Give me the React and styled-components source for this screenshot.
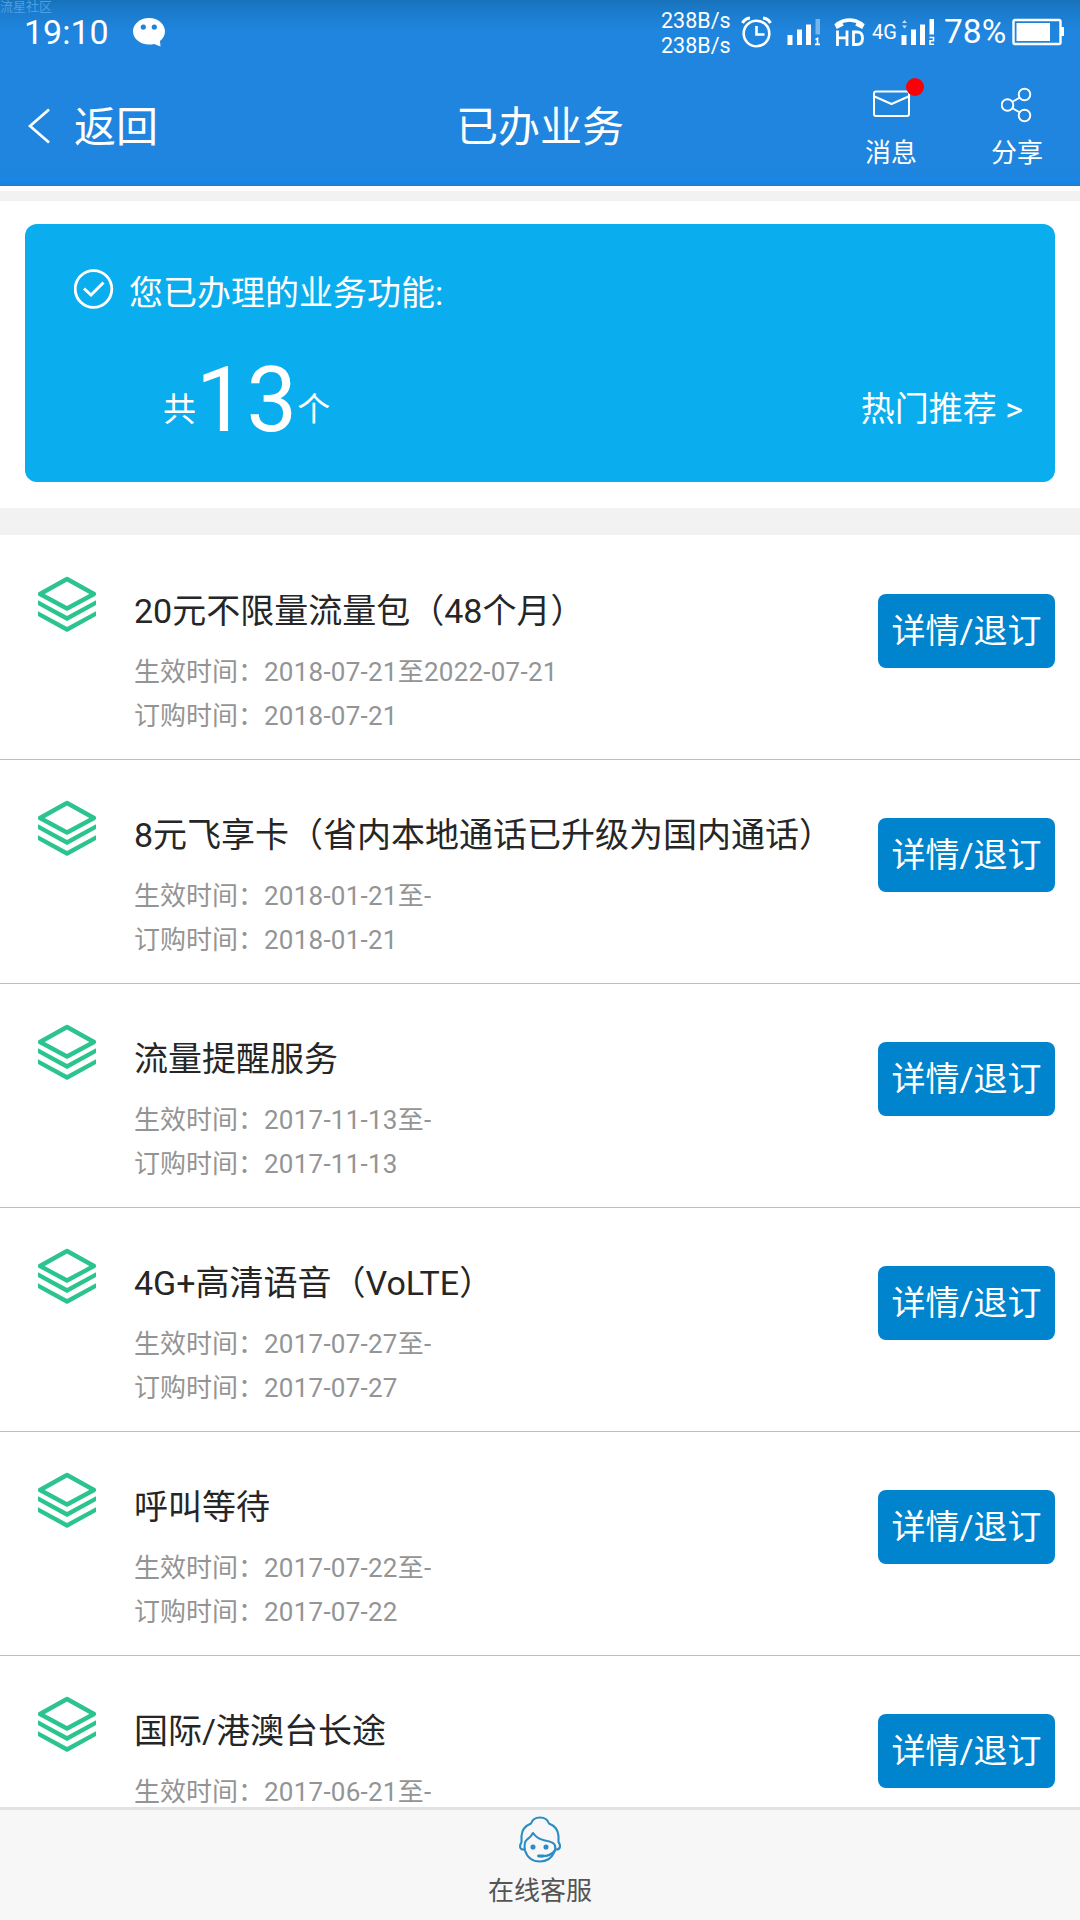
import React from "react";
import styled, { createGlobalStyle } from "styled-components";

const GlobalStyle = createGlobalStyle`
  * { box-sizing: border-box; }
  html, body { margin: 0; padding: 0; }
  body {
    background: #fff;
    font-family: Roboto, "Noto Sans CJK SC", sans-serif;
    color: #222;
    overflow: hidden;
  }
`;

const Screen = styled.div`
  width: 1080px;
  height: 1920px;
  display: flex;
  flex-direction: column;
  overflow: hidden;
  background: #fff;
`;

const Top = styled.header`
  position: relative;
  height: 186px;
  flex: none;
  color: #fff;
  background: linear-gradient(#1772ba 0, #1b7ccd 12px, #1f85de 32px, #1f85de 170px, #1a86e4 182px, #1c7fd6 186px);
`;

const Watermark = styled.span`
  position: absolute;
  left: 0;
  top: -2px;
  font-size: 13px;
  line-height: 18px;
  color: #4ba0e4;
`;

const StatusBar = styled.div`
  height: 64px;
  padding: 0 15px 0 24px;
  display: flex;
  align-items: center;
`;

const Clock = styled.span`
  font-size: 34px;
  line-height: 62px;
  width: 109px;
  margin-top: -1px;
`;

const StatusGroup = styled.div`
  margin-left: auto;
  display: flex;
  align-items: center;
`;

const Speed = styled.div`
  font-size: 21.5px;
  line-height: 25px;
  width: 80px;
  padding-top: 1px;
`;

const Network = styled.span`
  font-size: 20px;
  line-height: 62px;
  width: 28px;
  margin-left: -1px;
  margin-right: 1px;
`;

const Percent = styled.span`
  font-size: 33.5px;
  line-height: 62px;
  width: 68px;
`;

const StatusIcon = styled.svg`
  display: block;
  flex: none;
  margin-right: ${(p) => p.$gap || 0}px;
`;

const NavBar = styled.nav`
  height: 122px;
  display: grid;
  grid-template-columns: 1fr auto 1fr;
  padding: 0 37px 0 28px;
`;

const Back = styled.div`
  height: 126px;
  display: flex;
  align-items: center;
  gap: 24px;
  font-size: 42px;
  line-height: 60px;

  span { padding-top: 2px; }
  svg { margin-top: -2px; }
`;

const Title = styled.h1`
  margin: 0;
  font-size: 42px;
  font-weight: 400;
  line-height: 128px;
  padding-left: 9px;
`;

const Actions = styled.div`
  display: flex;
  justify-content: flex-end;
  gap: 74px;
`;

const Action = styled.div`
  position: relative;
  width: 52px;
  padding-top: 20px;
  display: flex;
  flex-direction: column;
  align-items: center;
  font-size: 26px;
  line-height: 34px;

  svg { display: block; margin-bottom: 12px; }
`;

const Dot = styled.i`
  position: absolute;
  left: 41px;
  top: 14px;
  width: 18px;
  height: 18px;
  border-radius: 50%;
  background: #fb0007;
`;

const Band = styled.div`
  flex: none;
  height: ${(p) => p.$height}px;
  margin-top: ${(p) => p.$before || 0}px;
  background: #f2f2f2;
`;

const Summary = styled.section`
  flex: none;
  height: 258px;
  margin: 23px 25px 26px;
  padding: 45px 32px 0 49px;
  border-radius: 12px;
  background: #0aadee;
  color: #fff;
`;

const SummaryHead = styled.div`
  display: flex;
  align-items: center;
  gap: 15px;
  height: 48px;
  font-size: 34px;
  line-height: 48px;

  svg { margin-top: -9px; }
`;

const SummaryBody = styled.div`
  display: flex;
  align-items: baseline;
  justify-content: space-between;
  margin-top: 19px;
  padding-left: 89px;
  font-size: 34px;
  line-height: 110px;
`;

const Count = styled.div`
  font-size: 33px;

  b {
    font-size: 90px;
    font-weight: 400;
    line-height: 110px;
    position: relative;
    top: 10px;
  }
`;

const List = styled.main`
  flex: 1;
  min-height: 0;
  padding-top: 1px;
  overflow: hidden;
`;

const Row = styled.article`
  height: 224px;
  display: flex;
  align-items: flex-start;
  padding: 39px 25px 0 38px;
  border-bottom: 1px solid #bdbdbd;
`;

const Info = styled.div`
  flex: 1;
  padding: 14px 0 0 38px;
`;

const Name = styled.h2`
  margin: 0 0 17px;
  font-size: 34px;
  font-weight: 400;
  line-height: 44px;
  color: #262626;
  white-space: nowrap;
`;

const Meta = styled.p`
  margin: 0;
  font-size: 26px;
  line-height: 44px;
  color: #949494;

  span { letter-spacing: 0.24px; }
`;

const DetailButton = styled.button`
  margin: 19px 0 0;
  padding: 1px 0 0;
  width: 177px;
  height: 74px;
  border: 0;
  border-radius: 8px;
  background: #0084cd;
  color: #fff;
  font: inherit;
  font-size: 34px;
  line-height: 73px;
`;

const Footer = styled.footer`
  flex: none;
  height: 113px;
  padding-top: 6px;
  border-top: 3px solid #e2e2e2;
  background: #f7f7f7;
  display: flex;
  flex-direction: column;
  align-items: center;
  font-size: 26px;
  line-height: 34px;
  color: #555;

  svg { margin-bottom: 11px; }
`;

const services = [
  { name: "20元不限量流量包（48个月）", valid: "2018-07-21至2022-07-21", ordered: "2018-07-21" },
  { name: "8元飞享卡（省内本地通话已升级为国内通话）", valid: "2018-01-21至-", ordered: "2018-01-21" },
  { name: "流量提醒服务", valid: "2017-11-13至-", ordered: "2017-11-13" },
  { name: "4G+高清语音（VoLTE）", valid: "2017-07-27至-", ordered: "2017-07-27" },
  { name: "呼叫等待", valid: "2017-07-22至-", ordered: "2017-07-22" },
  { name: "国际/港澳台长途", valid: "2017-06-21至-" },
];

const ChatIcon = () => (
  <StatusIcon width="32" height="29" viewBox="0 0 32 29">
    <path fillRule="evenodd" fill="#fff" d="M16 0C7 0 0 6 0 13.300S7 26.500 16 26.500c1.800 0 3.500-.2 5-.6L27.500 28.500 27 23C30.200 20.600 32 17.200 32 13.300 32 6 25 0 16 0ZM10.300 6.500a2.600 2.600 0 1 1 0 5.200a2.600 2.600 0 1 1 0-5.200ZM21.300 6.500a2.600 2.600 0 1 1 0 5.200a2.600 2.600 0 1 1 0-5.200Z" />
  </StatusIcon>
);

const AlarmIcon = () => (
  <StatusIcon $gap={15} width="31" height="32" viewBox="0 0 31 32" fill="none" stroke="#fff" strokeWidth="2.600">
    <circle cx="15.500" cy="17.500" r="12.800" />
    <path d="M15.500 10v8.500h8" />
    <path strokeWidth="3.200" d="M1.500 7Q4 2.500 9 2M29.500 7Q27 2.500 22 2" />
  </StatusIcon>
);

const SignalIcon = ({ gap, level, index }) => (
  <StatusIcon $gap={gap} width="34" height="28" viewBox="0 0 34 28" fill="#fff">
    <path d="M.5 17h5v10h-5zM10 11.500h5V27h-5zM19 6.500h5V27h-5z" />
    <path opacity={level === 4 ? 1 : 0.4} d="M28.500 1H33v15.500h-4.500z" />
    {index === 1 ? (
      <path fill="none" stroke="#fff" strokeWidth="1.700" d="M28.500 21.500l2-1v6M28 26.300h5" />
    ) : (
      <g>
        <path fill="none" stroke="#fff" strokeWidth="1.500" d="M28.500 19.500h4v3.200h-3.500v3.600h4" />
        <path opacity=".75" d="M1 5L3.500 2l2.500 3zM1 7.500L3.500 10.500 6 7.500z" />
      </g>
    )}
  </StatusIcon>
);

const HdIcon = () => (
  <StatusIcon $gap={7} width="33" height="29" viewBox="0 0 33 29" fill="none" stroke="#fff">
    <path strokeWidth="3.400" d="M4 6Q16.500-2 29 6" />
    <path strokeWidth="5.500" d="M2.500 8.500L9.500 5M30.500 8.500L23.500 5" />
    <path strokeWidth="2.800" d="M4.500 12.500V28M14 12.500V28M4.500 19.800H14M20.500 14V26.500H24Q29.500 26.500 29.500 20.200T24 14Z" />
  </StatusIcon>
);

const BatteryIcon = () => (
  <StatusIcon width="53" height="28" viewBox="0 0 53 28">
    <rect x="1.500" y="2" width="47" height="24" rx="1.500" fill="none" stroke="#fff" strokeWidth="2.400" />
    <path fill="#fff" d="M4.500 5H38v18H4.500zM49 9h3v9h-3z" />
  </StatusIcon>
);

const LayersIcon = () => (
  <svg width="58" height="58" viewBox="0 0 58 58" fill="none" stroke="#2bc48e" strokeWidth="4.300" strokeLinejoin="round">
    <path d="M29 4L56 19 29 33.500 2 19Z" />
    <path d="M-2 26.500L29 43.500 60 26.500M-2 37.500L29 54.500 60 37.500" />
  </svg>
);

const AgentIcon = () => (
  <svg width="42" height="47" viewBox="0 0 42 47" fill="none" stroke="#2b8cc4" strokeWidth="2.100" strokeLinejoin="round" strokeLinecap="round">
    <path d="M5.500 33.500Q1 34 1 30Q1.500 28 2.500 26V20Q3 11 12 7.500Q14 1.500 21 1.500T30 7.500Q39 11 39.500 20V26Q41 28 41 30.500Q40.500 34 36.500 33.500" />
    <path d="M6 34.500Q4.500 26.500 8 23.500Q12 21 14 17Q18 23 26 24.500Q35 26 36 29.500Q37 34 35 36.500Q31 45.500 21 45.500Q9.500 45.500 6 34.500Z" />
    <path d="M20 40Q31 41 35.500 35" />
    <path strokeWidth="2.800" d="M19.500 40H24" />
    <circle cx="14" cy="31" r="1.500" fill="#2b8cc4" />
    <circle cx="27" cy="31" r="1.500" fill="#2b8cc4" />
  </svg>
);

export default function App() {
  return (
    <Screen>
      <GlobalStyle />
      <Top>
        <Watermark>流星社区</Watermark>
        <StatusBar>
          <Clock>19:10</Clock>
          <ChatIcon />
          <StatusGroup>
            <Speed>
              <div>238B/s</div>
              <div>238B/s</div>
            </Speed>
            <AlarmIcon />
            <SignalIcon gap={12} level={3} index={1} />
            <HdIcon />
            <Network>4G</Network>
            <SignalIcon gap={9} level={4} index={2} />
            <Percent>78%</Percent>
            <BatteryIcon />
          </StatusGroup>
        </StatusBar>
        <NavBar>
          <Back>
            <svg width="22" height="36" viewBox="0 0 22 36" fill="none" stroke="#fff" strokeWidth="2.800">
              <path d="M21 1.500L2 18 21 34.500" />
            </svg>
            <span>返回</span>
          </Back>
          <Title>已办业务</Title>
          <Actions>
            <Action>
              <svg width="38" height="40" viewBox="0 0 38 40" fill="none" stroke="#fff" strokeWidth="2" strokeLinejoin="round">
                <rect x="2" y="7.500" width="35" height="24.500" rx="2" />
                <path d="M2.500 12.500L19.500 20 36.500 12.500" />
              </svg>
              <Dot />
              消息
            </Action>
            <Action>
              <svg width="32" height="40" viewBox="0 0 32 40" fill="none" stroke="#fff" strokeWidth="1.900">
                <circle cx="6.500" cy="21" r="5.800" />
                <circle cx="23.500" cy="10.500" r="5.800" />
                <circle cx="23.500" cy="31.500" r="5.800" />
                <path d="M11 18L19 13.500M11 24L19 28.500" />
              </svg>
              分享
            </Action>
          </Actions>
        </NavBar>
      </Top>
      <Band $height={10} $before={5} />
      <Summary>
        <SummaryHead>
          <svg width="40" height="40" viewBox="0 0 40 40" fill="none" stroke="#fff" strokeWidth="2.800">
            <circle cx="19.500" cy="20" r="18.300" />
            <path strokeWidth="3" d="M10 19.500L17 26 29.500 13.500" />
          </svg>
          您已办理的业务功能:
        </SummaryHead>
        <SummaryBody>
          <Count>共<b>13</b>个</Count>
          <span>热门推荐 &gt;</span>
        </SummaryBody>
      </Summary>
      <Band $height={27} />
      <List>
        {services.map((s) => (
          <Row key={s.name}>
            <LayersIcon />
            <Info>
              <Name>{s.name}</Name>
              <Meta>生效时间：<span>{s.valid}</span></Meta>
              {s.ordered && <Meta>订购时间：<span>{s.ordered}</span></Meta>}
            </Info>
            <DetailButton>详情/退订</DetailButton>
          </Row>
        ))}
      </List>
      <Footer>
        <AgentIcon />
        在线客服
      </Footer>
    </Screen>
  );
}
